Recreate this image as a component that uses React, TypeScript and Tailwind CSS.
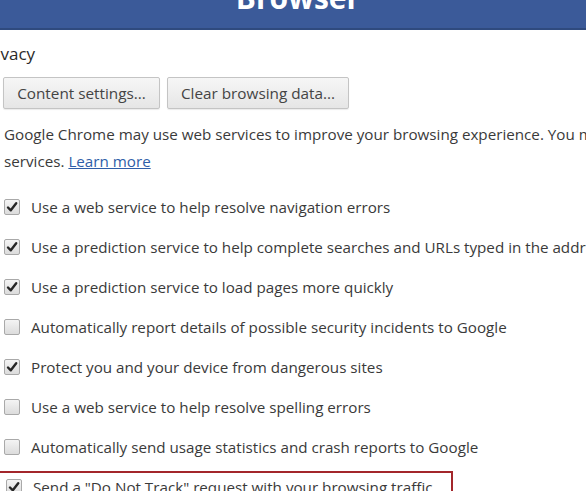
import type { ReactNode } from "react";

const rows: { label: string; checked: boolean }[] = [
  { label: "Use a web service to help resolve navigation errors", checked: true },
  { label: "Use a prediction service to help complete searches and URLs typed in the address bar", checked: true },
  { label: "Use a prediction service to load pages more quickly", checked: true },
  { label: "Automatically report details of possible security incidents to Google", checked: false },
  { label: "Protect you and your device from dangerous sites", checked: true },
  { label: "Use a web service to help resolve spelling errors", checked: false },
  { label: "Automatically send usage statistics and crash reports to Google", checked: false },
];

export default function App() {
  return (
    <div className="h-[491px] w-[586px] overflow-hidden bg-white font-['Open_Sans','Noto_Sans',sans-serif] text-[#3a3a3a]">
      <header className="h-[30px] overflow-hidden border-b-2 border-[#2f4a7e] bg-[#3b5a99]">
        <div className="-mt-[17px] pl-[10px] text-center text-[30px] font-bold leading-none text-white">Browser</div>
      </header>

      <div className="flex h-[47px] items-center whitespace-nowrap">
        <h2 className="-ml-[21px] text-[17px] font-normal text-[#2a2a2a]">Privacy</h2>
      </div>

      <div className="flex h-[32px] gap-[7px] pl-[3px]">
        <SettingsButton className="w-[157px]">Content settings...</SettingsButton>
        <SettingsButton className="w-[182px]">Clear browsing data...</SettingsButton>
      </div>

      <div className="mt-[12px] whitespace-nowrap pl-[4px] text-[15.2px] leading-[27px]">
        <p>Google Chrome may use web services to improve your browsing experience. You may optionally disable these</p>
        <p>
          services.{" "}
          <a href="#" className="text-[#2f5ea8] underline decoration-[#2f5ea8]">
            Learn more
          </a>
        </p>
      </div>

      <div className="mt-[12px]">
        {rows.map((row) => (
          <CheckRow key={row.label} label={row.label} checked={row.checked} />
        ))}
        <div className="-ml-[12px] mt-[4px] w-[465px] border-2 border-[#a3262b] pl-[12px]">
          <CheckRow label={'Send a "Do Not Track" request with your browsing traffic'} checked className="h-[28px]" />
        </div>
      </div>
    </div>
  );
}

function SettingsButton({ children, className }: { children: ReactNode; className?: string }) {
  return (
    <button
      className={`h-[32px] rounded-[2px] border border-[#c4c4c4] bg-gradient-to-b from-[#f6f6f6] to-[#e6e6e6] text-center text-[15.3px] text-[#444] shadow-[0_1px_1px_rgba(0,0,0,0.08)] ${className ?? ""}`}
    >
      {children}
    </button>
  );
}

function CheckRow({ label, checked, className }: { label: string; checked: boolean; className?: string }) {
  return (
    <div className={`flex items-center whitespace-nowrap ${className ?? "h-[40px]"}`}>
      <span className="ml-[4px] flex h-[16px] w-[16px] shrink-0 items-center justify-center rounded-[2px] border border-[#a9a9a9] bg-gradient-to-b from-[#f4f4f4] to-[#dcdcdc]">
        {checked && (
          <svg viewBox="0 0 12 12" className="h-[12px] w-[12px]">
            <path d="M2 6.5 L4.8 9.3 L10.2 2.2" fill="none" stroke="#262626" strokeWidth="2.4" strokeLinecap="round" strokeLinejoin="round" />
          </svg>
        )}
      </span>
      <span className="ml-[11px] text-[15.2px] text-[#3a3a3a]">{label}</span>
    </div>
  );
}
